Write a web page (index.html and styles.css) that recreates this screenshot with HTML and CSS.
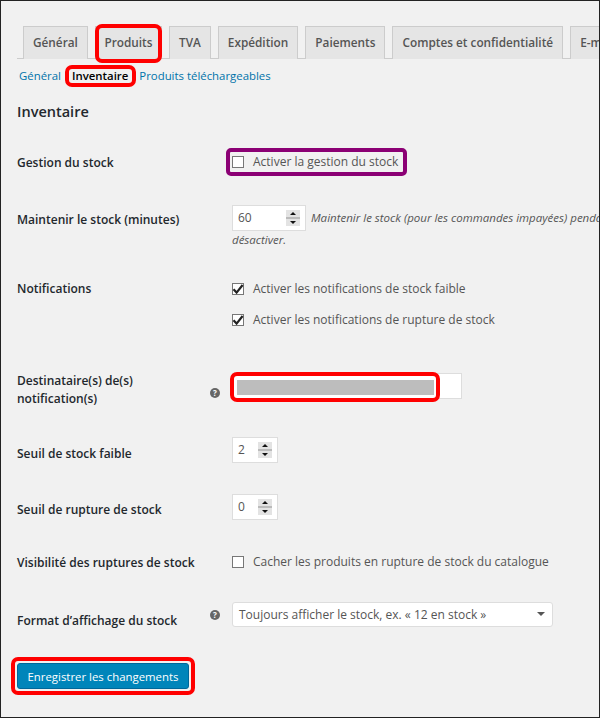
FILE: index.html
```html
<!DOCTYPE html>
<html lang="fr">
<head>
    <meta charset="UTF-8">
    <title>Inventaire</title>
    <link rel="stylesheet" href="styles.css">
</head>
<body>
    <div class="page">
        <nav class="tabs">
            <a class="tab">Général</a>
            <a class="tab mark mark-tab">Produits</a>
            <a class="tab">TVA</a>
            <a class="tab">Expédition</a>
            <a class="tab">Paiements</a>
            <a class="tab">Comptes et confidentialité</a>
            <a class="tab">E-mails</a>
        </nav>

        <div class="subnav">
            <a>Général</a>
            <strong class="mark mark-sub">Inventaire</strong>
            <a>Produits téléchargeables</a>
        </div>

        <h2 class="title">Inventaire</h2>

        <div class="row row-manage">
            <div class="label">Gestion du stock</div>
            <div class="field">
                <label class="check mark mark-purple"><span class="box"></span>Activer la gestion du stock</label>
            </div>
        </div>

        <div class="row row-hold">
            <div class="label">Maintenir le stock (minutes)</div>
            <div class="field">
                <div class="hold-line">
                    <div class="number number-wide">60<span class="spin"></span></div>
                    <em class="desc">Maintenir le stock (pour les commandes impayées) pendant x minutes. Lorsque cette limite est atteinte, la commande sera annulée. Laissez vide pour</em>
                </div>
                <em class="desc desc-next">désactiver.</em>
            </div>
        </div>

        <div class="row row-notify">
            <div class="label">Notifications</div>
            <div class="field checks">
                <label class="check"><span class="box checked"><svg viewBox="0 0 12 12" width="12" height="12"><path d="M1.5 6.2 4.6 9.6 10.6 2" fill="none" stroke="#222" stroke-width="2.2"/></svg></span>Activer les notifications de stock faible</label>
                <label class="check"><span class="box checked"><svg viewBox="0 0 12 12" width="12" height="12"><path d="M1.5 6.2 4.6 9.6 10.6 2" fill="none" stroke="#222" stroke-width="2.2"/></svg></span>Activer les notifications de rupture de stock</label>
            </div>
        </div>

        <div class="row row-recipient">
            <div class="label label-help">Destinataire(s) de(s) notification(s)<span class="help">?</span></div>
            <div class="field">
                <div class="text-input"><div class="mark mark-input"><div class="redacted"></div></div></div>
            </div>
        </div>

        <div class="row row-low">
            <div class="label">Seuil de stock faible</div>
            <div class="field"><div class="number">2<span class="spin"></span></div></div>
        </div>

        <div class="row row-out">
            <div class="label">Seuil de rupture de stock</div>
            <div class="field"><div class="number">0<span class="spin"></span></div></div>
        </div>

        <div class="row row-hide">
            <div class="label">Visibilité des ruptures de stock</div>
            <div class="field">
                <label class="check"><span class="box"></span>Cacher les produits en rupture de stock du catalogue</label>
            </div>
        </div>

        <div class="row row-format">
            <div class="label label-help">Format d’affichage du stock<span class="help">?</span></div>
            <div class="field">
                <div class="select">Toujours afficher le stock, ex. « 12 en stock »<span class="caret"></span></div>
            </div>
        </div>

        <button class="save mark mark-save">Enregistrer les changements</button>
    </div>
</body>
</html>
```

FILE: styles.css
```css
* {
    margin: 0;
    padding: 0;
    box-sizing: border-box;
}

html, body {
    height: 100%;
}

body {
    background: #f1f1f1;
    color: #444;
    font-family: 'Open Sans', 'Noto Sans', sans-serif;
    font-size: 12px;
    overflow: hidden;
}

.page {
    height: 718px;
    width: 600px;
    border: 1px solid #222;
    padding: 0 0 0 16px;
    overflow: hidden;
}

/* tabs */
.tabs {
    display: flex;
    gap: 7px;
    margin-top: 25px;
    padding-left: 6px;
    border-bottom: 1px solid #ccc;
    height: 33px;
    white-space: nowrap;
}

.tab {
    flex: none;
    height: 33px;
    padding: 0 9px;
    line-height: 31px;
    background: #e5e5e5;
    border: 1px solid #ccc;
    border-bottom: none;
    color: #555;
    font-weight: 600;
    font-size: 11.8px;
}

.mark {
    position: relative;
}

.mark::after {
    content: '';
    position: absolute;
    border: 4px solid #f00;
    border-radius: 7px;
    pointer-events: none;
}

.mark-tab {
    padding: 0 8.5px;
}

.mark-tab::after { inset: -3px -1px -4px -1px; }

/* sub navigation */
.subnav {
    display: flex;
    gap: 11px;
    margin-top: 8px;
    height: 17px;
    padding-left: 2px;
    line-height: 17px;
    color: #0073aa;
    font-size: 11.4px;
}

.subnav strong {
    color: #000;
    font-weight: 600;
}

.mark-sub::after { inset: -2px -8px -3px -7px; }

.title {
    margin-top: 18px;
    height: 20px;
    color: #23282d;
    font-size: 14.5px;
    font-weight: 600;
    line-height: 20px;
}

/* form rows */
.row {
    display: grid;
    grid-template-columns: 215px 1fr;
}

.label {
    position: relative;
    color: #23282d;
    font-weight: 600;
    font-size: 12px;
    line-height: 18px;
}

.label-help {
    padding-right: 50px;
}

.help {
    position: absolute;
    right: 12px;
    width: 10px;
    height: 10px;
    border-radius: 50%;
    background: #666;
    color: #fff;
    font-size: 8px;
    font-weight: 700;
    line-height: 10px;
    text-align: center;
}

.row-manage { margin-top: 22px; }
.row-manage .label { padding-top: 10px; }
.row-manage .check { margin-top: 9px; }
.row-hold { margin-top: 33px; }
.row-hold .label { padding-top: 6px; }
.row-notify { margin-top: 29px; }
.row-recipient { margin-top: 43px; }
.row-recipient .field { padding-top: 1px; }
.row-recipient .help { top: 16px; }
.row-low { margin-top: 29px; }
.row-low .label { padding-top: 8px; }
.row-out { margin-top: 31px; }
.row-out .label { padding-top: 7px; }
.row-hide { margin-top: 33px; }
.row-hide .label { padding-top: 1px; }
.row-format { margin-top: 30px; }
.row-format .label { padding-top: 10px; padding-right: 0; }
.row-format .help { top: 8px; }

.check {
    display: inline-flex;
    align-items: center;
    color: #555;
    font-size: 12px;
    line-height: 18px;
}

.mark-purple::after {
    inset: -5px -9px -5px -6px;
    border-color: #8b0074;
    border-radius: 5px;
}

.box {
    flex: none;
    width: 12px;
    height: 12px;
    margin-right: 9px;
    background: #fff;
    border: 1px solid #777;
    display: inline-flex;
}

.box.checked svg {
    margin: -1px;
}

.checks {
    display: flex;
    flex-direction: column;
    gap: 13px;
}

.checks .check { align-self: flex-start; }

.hold-line {
    display: flex;
    align-items: center;
    gap: 5px;
    white-space: nowrap;
}

.hold-line .desc {
    margin-top: -2px;
}

.desc {
    color: #555;
    font-size: 11.5px;
    line-height: 23px;
}

.desc-next {
    display: block;
    margin-top: -3px;
}

.number {
    position: relative;
    flex: none;
    width: 46px;
    height: 26px;
    padding-left: 5px;
    background: #fff;
    border: 1px solid #ddd;
    color: #555;
    font-size: 12px;
    line-height: 24px;
}

.number-wide { width: 74px; }

.spin {
    position: absolute;
    right: 5px;
    top: 4px;
    width: 14px;
    height: 16px;
    background:
        linear-gradient(#bbb, #bbb) 0 50% / 100% 2px no-repeat,
        #e3e3e3;
}

.spin::before,
.spin::after {
    content: '';
    position: absolute;
    left: 3.5px;
    border-left: 3.5px solid transparent;
    border-right: 3.5px solid transparent;
}

.spin::before {
    top: 2px;
    border-bottom: 3px solid #111;
}

.spin::after {
    bottom: 2px;
    border-top: 3px solid #111;
}

.text-input {
    width: 230px;
    height: 26px;
    background: #fff;
    border: 1px solid #ddd;
}

.mark-input {
    width: 204px;
    height: 24px;
    padding: 6px 3px 0 4px;
}

.mark-input::after { inset: -2px -3px -4px -3px; }

.redacted {
    height: 15px;
    background: #bdbdbd;
}

.select {
    position: relative;
    width: 321px;
    height: 25px;
    padding-left: 6px;
    background: #fff;
    border: 1px solid #ddd;
    border-radius: 3px;
    color: #555;
    font-size: 12px;
    line-height: 23px;
}

.caret {
    position: absolute;
    right: 7px;
    top: 9px;
    border-left: 4px solid transparent;
    border-right: 4px solid transparent;
    border-top: 4px solid #555;
}

/* save button */
.save {
    display: block;
    margin-top: 33px;
    width: 172px;
    height: 26px;
    padding-top: 1px;
    background: #0085ba;
    border: 1px solid #006799;
    border-radius: 3px;
    color: #fff;
    font-family: inherit;
    font-size: 11.4px;
}

.mark-save::after { inset: -7px -7px -7px -7px; }
```
